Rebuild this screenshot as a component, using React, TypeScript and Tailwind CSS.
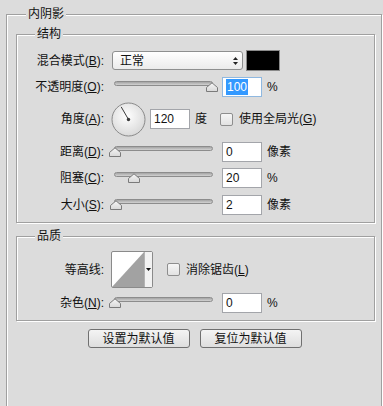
import React from 'react';

const groupBox =
  'border border-[#a0a0a0] shadow-[inset_1px_1px_0_#ffffff,1px_1px_0_#ffffff]';

function Key({ k }: { k: string }) {
  return (
    <>
      (<span className="underline underline-offset-[1px]">{k}</span>)
    </>
  );
}

function Thumb() {
  return (
    <svg width="12" height="10" viewBox="0 0 12 10">
      <defs>
        <linearGradient id="thumbFill" x1="0" y1="0" x2="0" y2="1">
          <stop offset="0" stopColor="#f6f6f6" />
          <stop offset="1" stopColor="#d8d8d8" />
        </linearGradient>
      </defs>
      <path d="M0.5 9.5 V5.5 L6 0.8 L11.5 5.5 V9.5 Z" fill="url(#thumbFill)" stroke="#7a7a7a" />
    </svg>
  );
}

function Slider({ pct }: { pct: number }) {
  return (
    <div className="relative h-5 w-[104px] shrink-0">
      <div className="absolute left-[2px] right-[3px] top-[4px] h-[5px] rounded-full border border-[#8c8c8c] bg-linear-to-b from-[#a4a4a4] to-[#d2d2d2]" />
      <div className="absolute top-[5px]" style={{ left: -3 + pct * 0.97 }}>
        <Thumb />
      </div>
    </div>
  );
}

function NumBox({ value, selected }: { value: string; selected?: boolean }) {
  return (
    <div
      className={`flex h-5 w-10 shrink-0 items-center bg-white pl-[3px] leading-none ${
        selected ? 'border border-[#8fb8e0]' : 'border border-[#a3a5aa]'
      }`}
    >
      {selected ? <span className="bg-[#3399ff] px-px py-[2px] text-white">{value}</span> : value}
    </div>
  );
}

function CheckBox() {
  return (
    <div className="h-[13px] w-[13px] shrink-0 rounded-[2px] border border-[#8e8e8e] bg-linear-to-b from-[#f6f6f6] to-[#e2e2e2]" />
  );
}

function Row({ label, className, children }: { label: React.ReactNode; className: string; children: React.ReactNode }) {
  return (
    <div className={`flex items-center ${className}`}>
      <div className="w-[87px] shrink-0 whitespace-nowrap text-right">{label}</div>
      <div className="ml-[8px] flex items-center">{children}</div>
    </div>
  );
}

function Dial() {
  return (
    <svg width="35" height="35" viewBox="0 0 35 35" className="-ml-px">
      <defs>
        <radialGradient id="dialFill" cx="45%" cy="40%" r="65%">
          <stop offset="0" stopColor="#ffffff" />
          <stop offset="1" stopColor="#d6d6d6" />
        </radialGradient>
      </defs>
      <circle cx="17.5" cy="17.5" r="16.5" fill="url(#dialFill)" stroke="#8a8a8a" />
      <line x1="17.5" y1="17.5" x2="10.2" y2="4.9" stroke="#3a3a3a" strokeWidth="1" />
      <circle cx="17.5" cy="17.5" r="1.7" fill="#3a3a3a" />
    </svg>
  );
}

function Contour() {
  return (
    <div className="-ml-px flex h-[37px] w-[42px] shrink-0 rounded-[2px] border border-[#8a8a8a] bg-white">
      <svg width="32" height="35" viewBox="0 0 32 35">
        <polygon points="0,35 32,0 32,35" fill="#a2a2a2" />
      </svg>
      <div className="flex flex-1 items-center justify-center border-l border-[#b4b4b4] bg-[#f2f2f2]">
        <svg width="5" height="3" viewBox="0 0 5 3">
          <polygon points="0,0 5,0 2.5,3" fill="#111111" />
        </svg>
      </div>
    </div>
  );
}

export default function App() {
  return (
    <div className="h-[406px] w-[383px] overflow-hidden bg-[#dcdcdc] pt-[6px] font-['Liberation_Sans','Noto_Sans_CJK_SC',sans-serif] text-[12px] text-[#111111]">
      <fieldset className={`ml-[6px] h-[420px] w-[376px] ${groupBox}`}>
        <legend className="ml-[19px] bg-[#dcdcdc] px-[2px] leading-[16px]">内阴影</legend>

        <fieldset className={`ml-[9px] mt-[4px] w-[359px] pb-[7px] pt-[8px] ${groupBox}`}>
          <legend className="ml-[18px] bg-[#dcdcdc] px-[2px] leading-[16px]">结构</legend>

          <Row className="h-[21px]" label={<>混合模式<Key k="B" />:</>}>
            <div className="flex h-[19px] w-[131px] items-center justify-between rounded-[3px] border border-[#8e8f8f] bg-linear-to-b from-[#ffffff] to-[#ebebeb] pl-[7px] pr-[4px]">
              <span>正常</span>
              <svg width="5" height="8" viewBox="0 0 5 8">
                <polygon points="2.5,0 5,3 0,3" fill="#222222" />
                <polygon points="0,5 5,5 2.5,8" fill="#222222" />
              </svg>
            </div>
            <div className="ml-[3px] h-[21px] w-[34px] border border-[#8a8a8a] bg-black" />
          </Row>

          <Row className="mt-[6px] h-5" label={<>不透明度<Key k="O" />:</>}>
            <Slider pct={100} />
            <div className="ml-[6px]">
              <NumBox value="100" selected />
            </div>
            <span className="ml-[5px]">%</span>
          </Row>

          <Row className="mt-[5px] h-[34px]" label={<>角度<Key k="A" />:</>}>
            <Dial />
            <div className="ml-[4px]">
              <NumBox value="120" />
            </div>
            <span className="ml-[5px]">度</span>
            <div className="ml-[13px]">
              <CheckBox />
            </div>
            <span className="ml-[6px]">
              使用全局光<Key k="G" />
            </span>
          </Row>

          <Row className="mt-[6px] h-5" label={<>距离<Key k="D" />:</>}>
            <Slider pct={0} />
            <div className="ml-[6px]">
              <NumBox value="0" />
            </div>
            <span className="ml-[5px]">像素</span>
          </Row>

          <Row className="mt-[6px] h-5" label={<>阻塞<Key k="C" />:</>}>
            <Slider pct={20} />
            <div className="ml-[6px]">
              <NumBox value="20" />
            </div>
            <span className="ml-[5px]">%</span>
          </Row>

          <Row className="mt-[7px] h-5" label={<>大小<Key k="S" />:</>}>
            <Slider pct={1} />
            <div className="ml-[6px]">
              <NumBox value="2" />
            </div>
            <span className="ml-[5px]">像素</span>
          </Row>
        </fieldset>

        <fieldset className={`ml-[9px] mt-[5px] w-[359px] pb-[7px] pt-[7px] ${groupBox}`}>
          <legend className="ml-[18px] bg-[#dcdcdc] px-[2px] leading-[16px]">品质</legend>

          <Row className="h-[37px]" label="等高线:">
            <Contour />
            <div className="ml-[14px]">
              <CheckBox />
            </div>
            <span className="ml-[6px]">
              消除锯齿<Key k="L" />
            </span>
          </Row>

          <Row className="mt-[5px] h-5" label={<>杂色<Key k="N" />:</>}>
            <Slider pct={0} />
            <div className="ml-[6px]">
              <NumBox value="0" />
            </div>
            <span className="ml-[5px]">%</span>
          </Row>
        </fieldset>

        <div className="mt-[8px] flex justify-center gap-[10px] pl-px">
          <button className="h-[19px] w-[102px] rounded-[3px] border border-[#707070] bg-linear-to-b from-[#f4f4f4] to-[#dedede] leading-none">
            设置为默认值
          </button>
          <button className="h-[19px] w-[102px] rounded-[3px] border border-[#707070] bg-linear-to-b from-[#f4f4f4] to-[#dedede] leading-none">
            复位为默认值
          </button>
        </div>
      </fieldset>
    </div>
  );
}
